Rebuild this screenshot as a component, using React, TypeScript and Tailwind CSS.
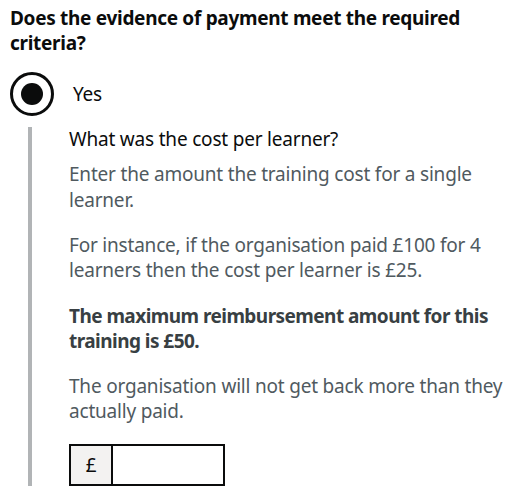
import React from "react";

const font = { fontFamily: '"Noto Sans", Arial, sans-serif' };

export default function App() {
    return (
        <div className="w-[512px] h-[497px] bg-white pl-[10px] pt-[6px] text-[#0b0c0c] overflow-hidden" style={font}>
            {/* Question */}
            <h2 className="text-[19px] leading-[25px] font-bold tracking-[-0.3px] pr-[10px]">
                Does the evidence of payment meet the required criteria?
            </h2>

            {/* Radio */}
            <div className="mt-[16px] flex items-center">
                <div className="w-[44px] h-[44px] rounded-full border-[3px] border-[#0b0c0c] flex items-center justify-center">
                    <div className="w-[22px] h-[22px] rounded-full bg-[#0b0c0c]" />
                </div>
                <span className="ml-[19px] text-[19px] leading-[25px] tracking-[-0.2px]">Yes</span>
            </div>

            {/* Conditional reveal */}
            <div className="mt-[11px] ml-[18px] border-l-4 border-[#b1b4b6] pl-[37px] pr-[4px] text-[19px] leading-[25px] tracking-[-0.2px]">
                <div>What was the cost per learner?</div>
                <div className="mt-[9px] text-[#505a5f] leading-[26px]">
                    Enter the amount the training cost for a single learner.
                </div>
                <p className="mt-[20px] text-[#505a5f]">
                    For instance, if the organisation paid £100 for 4 learners then the cost per learner is £25.
                </p>
                <p className="mt-[21px] text-[#383f43] font-bold tracking-[-0.55px]">
                    The maximum reimbursement amount for this training is £50.
                </p>
                <p className="mt-[20px] text-[#505a5f]">
                    The organisation will not get back more than they actually paid.
                </p>
                <div className="mt-[20px] flex w-[156px] h-[42px]">
                    <div className="w-[44px] h-full bg-[#f3f2f1] border-2 border-[#0b0c0c] flex items-center justify-center text-[19px]">
                        £
                    </div>
                    <input className="flex-1 min-w-0 h-full border-2 border-l-0 border-[#0b0c0c] outline-none" />
                </div>
            </div>
        </div>
    );
}
